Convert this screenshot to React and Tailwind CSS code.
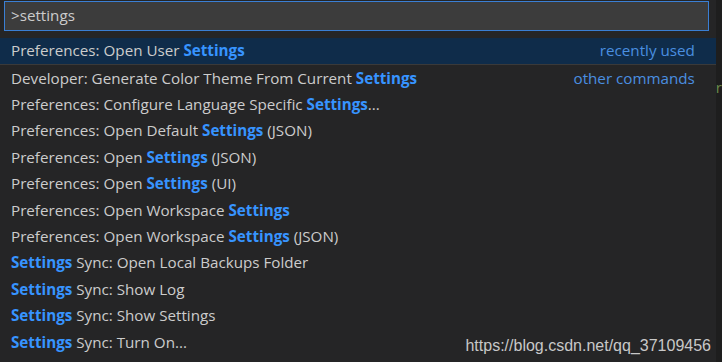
import React from "react";

const items = [
  { pre: "Preferences: Open User ", hl: "Settings", post: "", label: "recently used", active: true },
  { pre: "Developer: Generate Color Theme From Current ", hl: "Settings", post: "", label: "other commands" },
  { pre: "Preferences: Configure Language Specific ", hl: "Settings", post: "..." },
  { pre: "Preferences: Open Default ", hl: "Settings", post: " (JSON)" },
  { pre: "Preferences: Open ", hl: "Settings", post: " (JSON)" },
  { pre: "Preferences: Open ", hl: "Settings", post: " (UI)" },
  { pre: "Preferences: Open Workspace ", hl: "Settings", post: "" },
  { pre: "Preferences: Open Workspace ", hl: "Settings", post: " (JSON)" },
  { pre: "", hl: "Settings", post: " Sync: Open Local Backups Folder" },
  { pre: "", hl: "Settings", post: " Sync: Show Log" },
  { pre: "", hl: "Settings", post: " Sync: Show Settings" },
  { pre: "", hl: "Settings", post: " Sync: Turn On..." },
];

const Row = ({ item }) => (
  <div
    className={`flex items-center justify-between pl-[11px] pr-[21px] h-[26.4px] ${
      item.active ? "bg-[#0f2c4a] h-[27px] border-b border-[#3a3a3a]" : ""
    }`}
  >
    <span className="whitespace-pre text-[#cccccc]">
      {item.pre}
      <span className="font-bold text-[#3794ff]">{item.hl}</span>
      {item.post}
    </span>
    {item.label && <span className="text-[#4a8fe0]">{item.label}</span>}
  </div>
);

const App = () => {
  return (
    <div className="w-[722px] h-[362px] bg-[#1e1e1e] flex overflow-hidden relative">
      <div
        className="w-[717px] h-full bg-[#252526] text-[15.2px] leading-none"
        style={{ fontFamily: "'Open Sans', 'Noto Sans', sans-serif" }}
      >
        <div className="pl-[4px] pr-[7px] pt-[1px]">
          <div className="h-[30px] bg-[#3c3c3c] border border-[#3a7fd4] flex items-center pl-[6px] text-[#cccccc]">
            &gt;settings
          </div>
        </div>
        <div className="mt-[7px]">
          {items.map((item, i) => (
            <Row key={i} item={item} />
          ))}
        </div>
      </div>
      <div className="flex-1 pt-[76px] text-[#6a8a4a] text-[15px]" style={{ fontFamily: "'Open Sans', sans-serif" }}>
        r
      </div>
      <div
        className="absolute right-[11px] bottom-[8px] text-[#c8c8c8] text-[16px] leading-none"
        style={{ fontFamily: "'Liberation Sans', Arial, sans-serif" }}
      >
        https://blog.csdn.net/qq_37109456
      </div>
    </div>
  );
};

export default App;
